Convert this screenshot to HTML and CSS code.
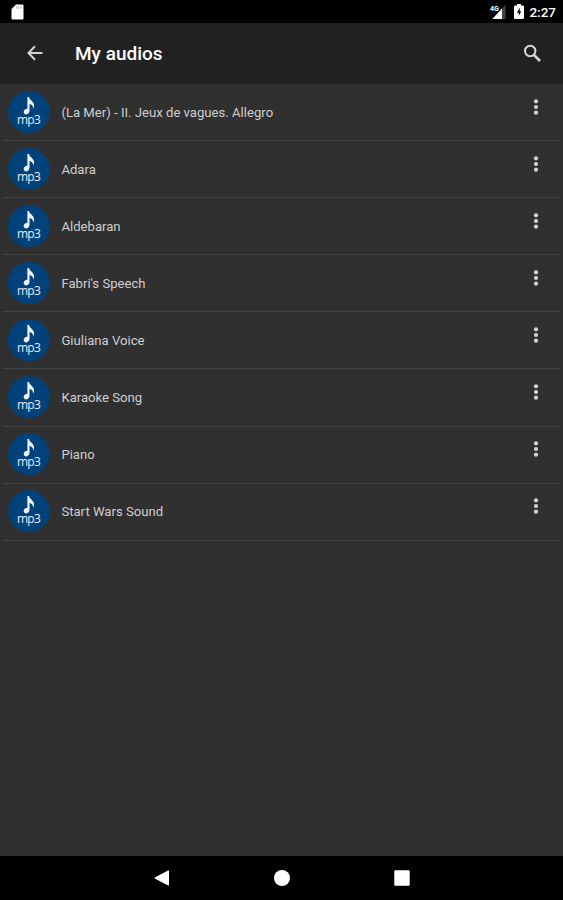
FILE: index.html
```html
<!DOCTYPE html>
<html lang="en">
<head>
<meta charset="utf-8">
<title>My audios</title>
<link rel="stylesheet" href="styles.css">
</head>
<body>
<svg class="defs" width="0" height="0">
  <symbol id="note" viewBox="0 0 12 20">
    <path d="M4.200 0h1.900c.3 3.200 4.900 4.600 5.500 8.700.2 1.700-.3 3.100-1 4.400.1-3.500-1.600-5-4-5.400v7.400c0 2.700-1.700 4.300-3.600 4.300-1.700 0-2.900-1-2.900-2.600 0-2.200 1.800-3.900 4.100-3.800z" fill="#eef1fa"/>
  </symbol>
  <symbol id="dots" viewBox="0 0 6 18">
    <circle cx="3" cy="3.300" r="2.100"/><circle cx="3" cy="9" r="2.100"/><circle cx="3" cy="14.700" r="2.100"/>
  </symbol>
</svg>
<div class="screen">
  <header class="status">
    <svg class="sd" width="13" height="16" viewBox="0 0 13 16"><path d="M5 .5h6.200q1.300 0 1.300 1.300v12.400q0 1.300-1.300 1.300H1.800Q.5 15.500.5 14.200V5z" fill="#fff"/><path d="M5.700 2.200v2.500M7.900 2.200v2.500M10.100 2.200v2.500" stroke="#999" stroke-width=".8"/></svg>
    <div class="indicators">
      <svg width="17" height="16" viewBox="0 0 17 16"><path d="M16.500 1v14H2.500z" fill="#444"/><path d="M13 4.500V15H3.500z" fill="#fff"/><text class="net" x="1" y="7">4G</text></svg>
      <svg class="battery" width="10" height="15" viewBox="0 0 10 15"><path d="M3 0h4v1.500h1.800q1.200 0 1.200 1.200v11.100q0 1.200-1.200 1.200H1.200Q0 15 0 13.800V2.700q0-1.200 1.200-1.200H3z" fill="#fff"/><path d="M5.700 3.500 3 8.800h1.800v3.200L7.200 7.200H5.700z" fill="#000"/></svg>
      <span class="time">2:27</span>
    </div>
  </header>
  <div class="appbar">
    <svg class="back" width="16" height="16" viewBox="0 0 16 16"><path d="M15.500 8H1.600M8 1.300 1.500 8 8 14.700" fill="none" stroke="#d2d2d2" stroke-width="2"/></svg>
    <h1>My audios</h1>
    <svg class="search" width="19" height="19" viewBox="0 0 19 19"><circle cx="7.200" cy="7" r="5.200" fill="none" stroke="#d8d8d8" stroke-width="2"/><path d="m11 11 6 6" stroke="#d8d8d8" stroke-width="2.600"/></svg>
  </div>
  <ul class="list">
    <li><div class="icon"><svg class="note"><use href="#note"/></svg><b>mp3</b></div><span>(La Mer) - II. Jeux de vagues. Allegro</span><svg class="more"><use href="#dots"/></svg></li>
    <li><div class="icon"><svg class="note"><use href="#note"/></svg><b>mp3</b></div><span>Adara</span><svg class="more"><use href="#dots"/></svg></li>
    <li><div class="icon"><svg class="note"><use href="#note"/></svg><b>mp3</b></div><span>Aldebaran</span><svg class="more"><use href="#dots"/></svg></li>
    <li><div class="icon"><svg class="note"><use href="#note"/></svg><b>mp3</b></div><span>Fabri's Speech</span><svg class="more"><use href="#dots"/></svg></li>
    <li><div class="icon"><svg class="note"><use href="#note"/></svg><b>mp3</b></div><span>Giuliana Voice</span><svg class="more"><use href="#dots"/></svg></li>
    <li><div class="icon"><svg class="note"><use href="#note"/></svg><b>mp3</b></div><span>Karaoke Song</span><svg class="more"><use href="#dots"/></svg></li>
    <li><div class="icon"><svg class="note"><use href="#note"/></svg><b>mp3</b></div><span>Piano</span><svg class="more"><use href="#dots"/></svg></li>
    <li><div class="icon"><svg class="note"><use href="#note"/></svg><b>mp3</b></div><span>Start Wars Sound</span><svg class="more"><use href="#dots"/></svg></li>
  </ul>
  <nav class="navbar">
    <svg width="16" height="16" viewBox="0 0 16 16"><path d="M14.500.8v14.400L.8 8z" fill="#fff" stroke="#fff" stroke-linejoin="round"/></svg>
    <svg width="16" height="16" viewBox="0 0 16 16"><circle cx="8" cy="8" r="8" fill="#fff"/></svg>
    <svg width="16" height="16" viewBox="0 0 16 16"><rect x=".3" y=".3" width="15.400" height="15.400" rx="1" fill="#fff"/></svg>
  </nav>
</div>
</body>
</html>
```
FILE: styles.css
```css
* { box-sizing: border-box; }
body { margin: 0; background: #303030; font-family: Roboto, sans-serif; }
svg { display: block; flex: none; }
.defs { position: absolute; }
.screen { height: 900px; display: flex; flex-direction: column; overflow: hidden; }

.status {
  height: 23px;
  padding: 0 7px 0 11px;
  background: #000;
  display: flex;
  align-items: center;
  justify-content: space-between;
}
.indicators { display: flex; align-items: center; }
.battery { margin: 0 5px 0 8px; }
.net { font: 700 7px Roboto, sans-serif; fill: #fff; }
.time { color: #fff; font-size: 13.5px; font-weight: 500; line-height: 23px; padding-top: 2px; }

.appbar {
  height: 61px;
  padding: 0 21px 1px 27px;
  background: #212121;
  display: flex;
  align-items: center;
}
h1 { margin: 2px 0 0 32px; font-size: 19px; line-height: 24px; font-weight: 500; color: #fff; flex: 1; }

.list { list-style: none; margin: 0 3px; padding: 0; flex: 1; }
li {
  height: 57.1px;
  padding-left: 5px;
  border-bottom: 1px solid #434343;
  display: flex;
  align-items: center;
  color: #cecece;
  font-size: 13.13px;
}
li span { flex: 1; margin-left: 11.4px; }
.icon {
  width: 42px;
  height: 42px;
  margin-bottom: 1px;
  padding: 6px 1px 0 0;
  border-radius: 50%;
  background: #02427a;
  display: flex;
  flex-direction: column;
  align-items: center;
}
.note { width: 12px; height: 18px; }
.icon b { font: 12px/12px "Open Sans", sans-serif; letter-spacing: -0.8px; color: #e4ecf8; margin-top: -1px; }
.more { width: 6px; height: 18px; margin: 0 21.500px 11px 0; fill: #d4d4d4; }

.navbar {
  height: 44px;
  background: #000;
  display: flex;
  align-items: center;
  justify-content: center;
  gap: 104px;
}
```
